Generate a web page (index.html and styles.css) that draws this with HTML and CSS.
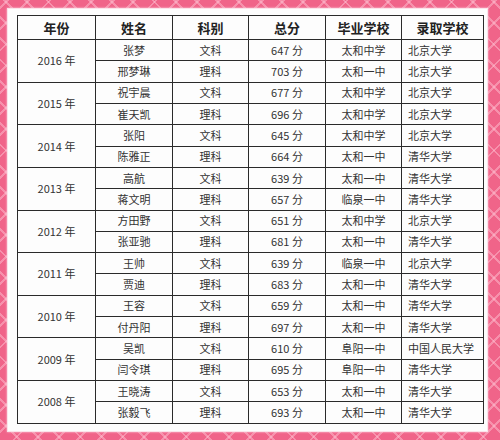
FILE: index.html
```html
<!DOCTYPE html>
<html lang="zh">
<head>
<meta charset="utf-8">
<title>历年高考状元</title>
<link rel="stylesheet" href="styles.css">
</head>
<body>
<div class="paper">
<table class="scores">
<colgroup>
<col class="c1"><col class="c2"><col class="c3"><col class="c4"><col class="c5"><col class="c6">
</colgroup>
<thead>
<tr><th>年份</th><th>姓名</th><th>科别</th><th>总分</th><th>毕业学校</th><th>录取学校</th></tr>
</thead>
<tbody>
<tr><td rowspan="2" class="year">2016 年</td><td>张梦</td><td>文科</td><td>647 分</td><td>太和中学</td><td class="uni">北京大学</td></tr>
<tr><td>邢梦琳</td><td>理科</td><td>703 分</td><td>太和一中</td><td class="uni">北京大学</td></tr>
<tr><td rowspan="2" class="year">2015 年</td><td>祝宇晨</td><td>文科</td><td>677 分</td><td>太和中学</td><td class="uni">北京大学</td></tr>
<tr><td>崔天凯</td><td>理科</td><td>696 分</td><td>太和中学</td><td class="uni">北京大学</td></tr>
<tr><td rowspan="2" class="year">2014 年</td><td>张阳</td><td>文科</td><td>645 分</td><td>太和中学</td><td class="uni">北京大学</td></tr>
<tr><td>陈雅正</td><td>理科</td><td>664 分</td><td>太和一中</td><td class="uni">清华大学</td></tr>
<tr><td rowspan="2" class="year">2013 年</td><td>高航</td><td>文科</td><td>639 分</td><td>太和一中</td><td class="uni">清华大学</td></tr>
<tr><td>蒋文明</td><td>理科</td><td>657 分</td><td>临泉一中</td><td class="uni">清华大学</td></tr>
<tr><td rowspan="2" class="year">2012 年</td><td>方田野</td><td>文科</td><td>651 分</td><td>太和中学</td><td class="uni">北京大学</td></tr>
<tr><td>张亚驰</td><td>理科</td><td>681 分</td><td>太和一中</td><td class="uni">清华大学</td></tr>
<tr><td rowspan="2" class="year">2011 年</td><td>王帅</td><td>文科</td><td>639 分</td><td>临泉一中</td><td class="uni">北京大学</td></tr>
<tr><td>贾迪</td><td>理科</td><td>683 分</td><td>太和一中</td><td class="uni">清华大学</td></tr>
<tr><td rowspan="2" class="year">2010 年</td><td>王容</td><td>文科</td><td>659 分</td><td>太和一中</td><td class="uni">清华大学</td></tr>
<tr><td>付丹阳</td><td>理科</td><td>697 分</td><td>太和一中</td><td class="uni">清华大学</td></tr>
<tr><td rowspan="2" class="year">2009 年</td><td>吴凯</td><td>文科</td><td>610 分</td><td>阜阳一中</td><td class="uni">中国人民大学</td></tr>
<tr><td>闫令琪</td><td>理科</td><td>695 分</td><td>阜阳一中</td><td class="uni">清华大学</td></tr>
<tr><td rowspan="2" class="year">2008 年</td><td>王晓涛</td><td>文科</td><td>653 分</td><td>太和一中</td><td class="uni">清华大学</td></tr>
<tr><td>张毅飞</td><td>理科</td><td>693 分</td><td>太和一中</td><td class="uni">清华大学</td></tr>
</tbody>
</table>
</div>
</body>
</html>
```
FILE: styles.css
```css
html, body {
  margin: 0;
  padding: 0;
}
body {
  width: 500px;
  height: 440px;
  overflow: hidden;
  background-color: #f06489;
  background-image:
    repeating-linear-gradient(45deg, transparent 0 13px, rgba(255, 200, 215, 0.45) 13px 15px),
    repeating-linear-gradient(-45deg, transparent 0 13px, rgba(255, 200, 215, 0.45) 13px 15px);
  padding: 9px 13px 9px 8px;
  box-sizing: border-box;
  font-family: "Noto Sans CJK SC", "Noto Sans", sans-serif;
  color: #222;
}
.paper {
  background: #fdfdfd;
  height: 422px;
  padding: 6px 4px 0 9px;
  box-sizing: border-box;
  box-shadow: 0 0 0 1px #fbe3ea, 0 0 2px 1px #fbd0dc;
}
.scores {
  border-collapse: collapse;
  width: 466px;
  table-layout: fixed;
}
.c1 { width: 78px; }
.c2 { width: 77px; }
.c3 { width: 76px; }
.c4 { width: 77px; }
.c5 { width: 76px; }
.c6 { width: 82px; }
.scores th,
.scores td {
  border: 1px solid #2a2a2a;
  padding: 0;
  text-align: center;
  vertical-align: middle;
  white-space: nowrap;
  line-height: 1;
}
.scores th {
  height: 23px;
  font-size: 13px;
  font-weight: 700;
}
.scores td {
  height: 20.32px;
  font-size: 11px;
  color: #333;
}
.scores td.uni {
  text-align: left;
  padding-left: 6px;
}
.scores td.year {
  font-size: 11px;
}
```
